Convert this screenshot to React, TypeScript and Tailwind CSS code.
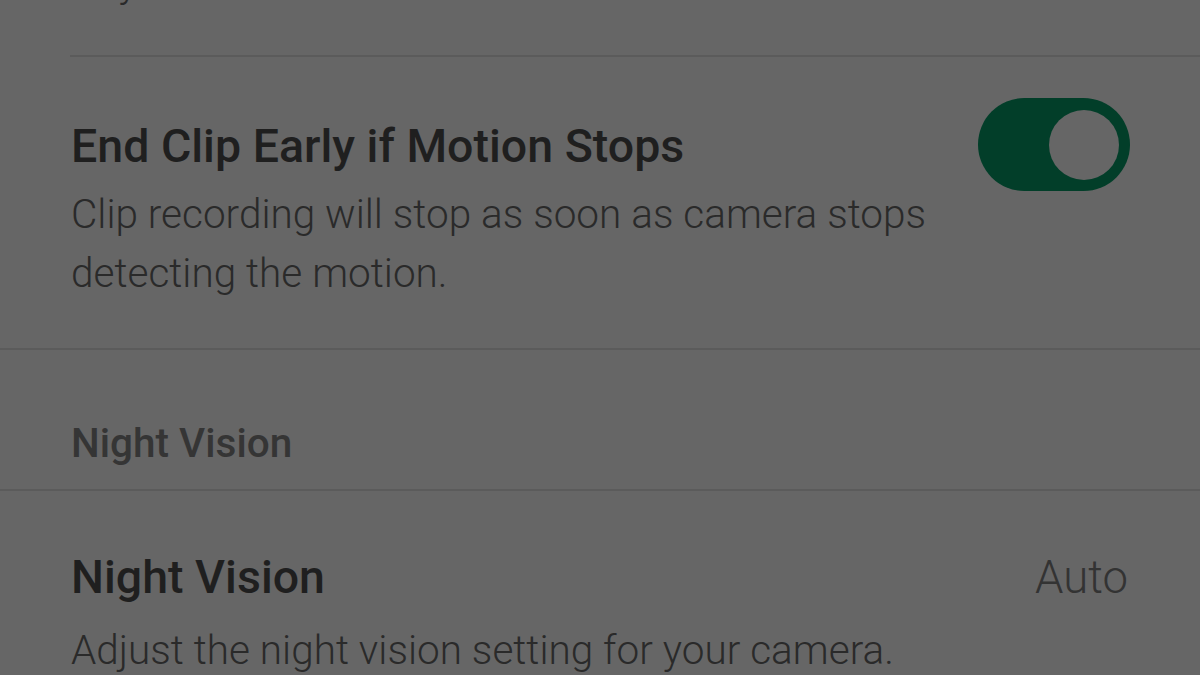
import React from "react";

const Toggle = ({ on }: { on: boolean }) => (
  <div
    className={
      "flex h-[93px] w-[152px] shrink-0 items-center rounded-full px-[11px] " +
      (on ? "justify-end bg-[#023e29]" : "justify-start bg-[#4a4a4a]")
    }
  >
    <div className="h-[70px] w-[70px] rounded-full bg-[#666666]" />
  </div>
);

const Divider = ({ inset }: { inset?: boolean }) => (
  <div className={"h-[2px] bg-[#5b5b5b] " + (inset ? "ml-[70px]" : "")} />
);

export default function App() {
  return (
    <div
      className="h-[675px] w-[1200px] overflow-hidden bg-[#666666] text-[#1f1f1f]"
      style={{ fontFamily: "Roboto, 'Noto Sans', sans-serif" }}
    >
      {/* tail of previous setting, scrolled off the top */}
      <div className="-mt-[46px] pb-[42px] pl-[71px] pr-[70px]">
        <p className="text-[40.5px] font-light leading-[59px] text-[#2a2a2a]">
          Any motion.
        </p>
      </div>
      <Divider inset />

      <section className="flex flex-row items-start justify-between pb-[45px] pl-[71px] pr-[70px] pt-[61px]">
        <div className="flex flex-col gap-[11px]">
          <h2 className="text-[46.5px] font-medium leading-[56px]">
            End Clip Early if Motion Stops
          </h2>
          <p className="w-[880px] text-[40.5px] font-light leading-[59px] text-[#2a2a2a]">
            Clip recording will stop as soon as camera stops detecting the
            motion.
          </p>
        </div>
        <div className="mt-[-20px]">
          <Toggle on />
        </div>
      </section>
      <Divider />

      <div className="pb-[22px] pl-[71px] pt-[69px]">
        <h3 className="text-[40.5px] font-medium leading-[48px] text-[#353535]">
          Night Vision
        </h3>
      </div>
      <Divider />

      <section className="flex flex-row items-start justify-between pl-[71px] pr-[72px] pt-[58px]">
        <div className="flex flex-col gap-[16px]">
          <h2 className="text-[46.5px] font-medium leading-[56px]">
            Night Vision
          </h2>
          <p className="text-[40.5px] font-light leading-[59px] text-[#2a2a2a]">
            Adjust the night vision setting for your camera.
          </p>
        </div>
        <span className="pt-[1px] text-[45.5px] font-light leading-[56px] text-[#333333]">
          Auto
        </span>
      </section>
    </div>
  );
}
